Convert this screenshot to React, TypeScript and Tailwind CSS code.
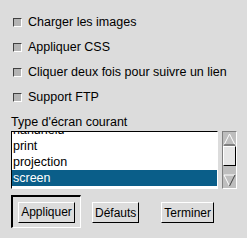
import React, { useState } from 'react';

// --- OPTIONS CONFIGURATION ---
const OPTIONS = [
  'Charger les images',
  'Appliquer CSS',
  'Cliquer deux fois pour suivre un lien',
  'Support FTP',
];

const MEDIA_TYPES = ['handheld', 'print', 'projection', 'screen', 'tty'];

function Checkbox({ label }: { label: string }) {
  return (
    <div className="flex items-center h-[25px] pl-[13px]">
      <span className="w-[9px] h-[9px] bg-[#b4b4b4] border-t border-l border-[#404040] border-r-white border-b-white border-r border-b shrink-0" />
      <span className="ml-[6px] text-[12.5px] leading-none text-black">{label}</span>
    </div>
  );
}

function Button({ label }: { label: string }) {
  return (
    <button className="h-[21px] px-[2px] bg-[#dcdcdc] text-[12px] leading-none text-black border-t border-l border-white border-r border-b border-r-black border-b-black">
      {label}
    </button>
  );
}

export default function App() {
  const [selected] = useState('screen');

  return (
    <div className="w-[247px] h-[238px] bg-[#dcdcdc] pt-[10px] font-['Liberation_Sans',Arial,sans-serif]">
      {OPTIONS.map(o => <Checkbox key={o} label={o} />)}

      <div className="mt-[5px] pl-[11px] text-[12.5px] leading-[15px] text-black">Type d'écran courant</div>

      <div className="flex mt-[1px] pl-[11px]">
        <div className="w-[207px] h-[58px] bg-white border-t border-l border-black border-r border-b border-r-white border-b-white overflow-hidden">
          <div className="-mt-[10px]">
            {MEDIA_TYPES.map(m => (
              <div
                key={m}
                className={`h-[16px] pl-[1px] text-[12.5px] leading-[16px] ${m === selected ? 'bg-[#0a5e89] text-white' : 'text-black'}`}
              >
                {m}
              </div>
            ))}
          </div>
        </div>

        {/* scrollbar */}
        <div className="ml-[4px] w-[15px] h-[58px] bg-[#bebebe] border-l border-t border-[#808080] border-r border-b border-r-white border-b-white flex flex-col items-center">
          <svg width="13" height="13" viewBox="0 0 13 13" className="mt-[1px]">
            <path d="M6.5 1 L12 12 M6.5 1 L1 12" stroke="white" fill="none" />
            <path d="M1 12 L12 12" stroke="#404040" />
          </svg>
          <div className="w-[13px] h-[20px] bg-[#e6e6e6] border-t border-l border-white border-r border-b border-r-black border-b-black" />
          <div className="flex-1" />
          <svg width="13" height="13" viewBox="0 0 13 13" className="mb-[1px]">
            <path d="M1 1 L12 1 M1 1 L6.5 12" stroke="white" fill="none" />
            <path d="M12 1 L6.5 12" stroke="#404040" />
          </svg>
        </div>
      </div>

      <div className="flex items-center mt-[6px] pl-[11px]">
        <div className="w-[70px] h-[33px] flex items-center justify-center border-t-2 border-l-2 border-black border-r border-b border-r-white border-b-white">
          <Button label="Appliquer" />
        </div>
        <div className="ml-[11px]"><Button label="Défauts" /></div>
        <div className="ml-[22px]"><Button label="Terminer" /></div>
      </div>
    </div>
  );
}
